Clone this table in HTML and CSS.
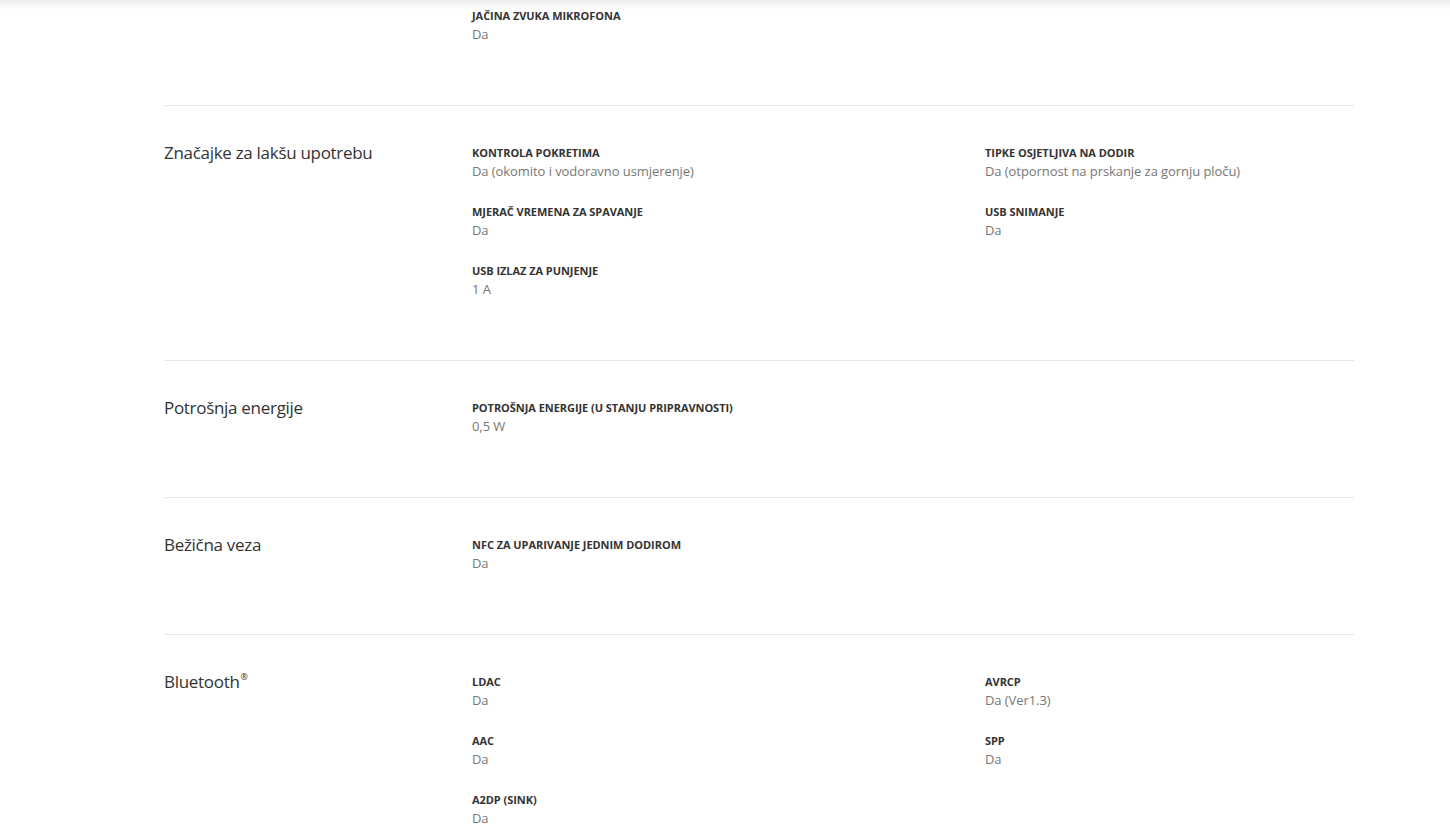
FILE: index.html
```html
<!DOCTYPE html>
<html lang="hr">
<head>
<meta charset="utf-8">
<link rel="stylesheet" href="styles.css">
</head>
<body>
<div class="top-shadow"></div>
<main class="specs">
  <section class="spec-section first">
    <h2 class="spec-title"></h2>
    <div class="spec-grid">
      <div class="spec-item"><div class="spec-label">Jačina zvuka mikrofona</div><div class="spec-value">Da</div></div>
    </div>
  </section>
  <section class="spec-section">
    <h2 class="spec-title">Značajke za lakšu upotrebu</h2>
    <div class="spec-grid">
      <div class="spec-item"><div class="spec-label">Kontrola pokretima</div><div class="spec-value">Da (okomito i vodoravno usmjerenje)</div></div>
      <div class="spec-item"><div class="spec-label">Tipke osjetljiva na dodir</div><div class="spec-value">Da (otpornost na prskanje za gornju ploču)</div></div>
      <div class="spec-item"><div class="spec-label">Mjerač vremena za spavanje</div><div class="spec-value">Da</div></div>
      <div class="spec-item"><div class="spec-label">USB snimanje</div><div class="spec-value">Da</div></div>
      <div class="spec-item"><div class="spec-label">USB izlaz za punjenje</div><div class="spec-value">1 A</div></div>
    </div>
  </section>
  <section class="spec-section">
    <h2 class="spec-title">Potrošnja energije</h2>
    <div class="spec-grid">
      <div class="spec-item"><div class="spec-label">Potrošnja energije (u stanju pripravnosti)</div><div class="spec-value">0,5 W</div></div>
    </div>
  </section>
  <section class="spec-section">
    <h2 class="spec-title">Bežična veza</h2>
    <div class="spec-grid">
      <div class="spec-item"><div class="spec-label">NFC za uparivanje jednim dodirom</div><div class="spec-value">Da</div></div>
    </div>
  </section>
  <section class="spec-section">
    <h2 class="spec-title">Bluetooth<sup class="reg">®</sup></h2>
    <div class="spec-grid">
      <div class="spec-item"><div class="spec-label">LDAC</div><div class="spec-value">Da</div></div>
      <div class="spec-item"><div class="spec-label">AVRCP</div><div class="spec-value">Da (Ver1.3)</div></div>
      <div class="spec-item"><div class="spec-label">AAC</div><div class="spec-value">Da</div></div>
      <div class="spec-item"><div class="spec-label">SPP</div><div class="spec-value">Da</div></div>
      <div class="spec-item"><div class="spec-label">A2DP (SINK)</div><div class="spec-value">Da</div></div>
    </div>
  </section>
</main>
</body>
</html>
```
FILE: styles.css
```css
html, body {
  margin: 0;
  padding: 0;
  background: #fff;
}
body {
  font-family: "Open Sans", "Noto Sans", sans-serif;
  color: #333;
  overflow: hidden;
}
.top-shadow {
  position: fixed;
  top: 0;
  left: 0;
  right: 0;
  height: 10px;
  background: linear-gradient(to bottom, rgba(0,0,0,0.07), rgba(0,0,0,0));
  pointer-events: none;
}
.specs {
  width: 1190px;
  margin: 0 0 0 164px;
}
.spec-section {
  display: grid;
  grid-template-columns: 308px 1fr;
  border-top: 1px solid #e6e6e6;
  padding: 39px 0 61px;
}
.spec-section.first {
  border-top: none;
  padding-top: 8px;
}
.spec-title {
  margin: -4px 0 0;
  font-size: 17px;
  line-height: 24px;
  font-weight: 400;
  color: #333;
  letter-spacing: -0.3px;
}
.reg {
  font-size: 9px;
  vertical-align: top;
  line-height: 14px;
  margin-left: 1px;
}
.spec-grid {
  display: grid;
  grid-template-columns: 513px 1fr;
  row-gap: 23px;
}
.spec-item {
  display: flex;
  flex-direction: column;
}
.spec-label {
  font-size: 11px;
  line-height: 16px;
  font-weight: 700;
  text-transform: uppercase;
  color: #333;
  letter-spacing: -0.05px;
}
.spec-value {
  font-size: 13px;
  line-height: 20px;
  color: #777;
  letter-spacing: -0.07px;
}
```
